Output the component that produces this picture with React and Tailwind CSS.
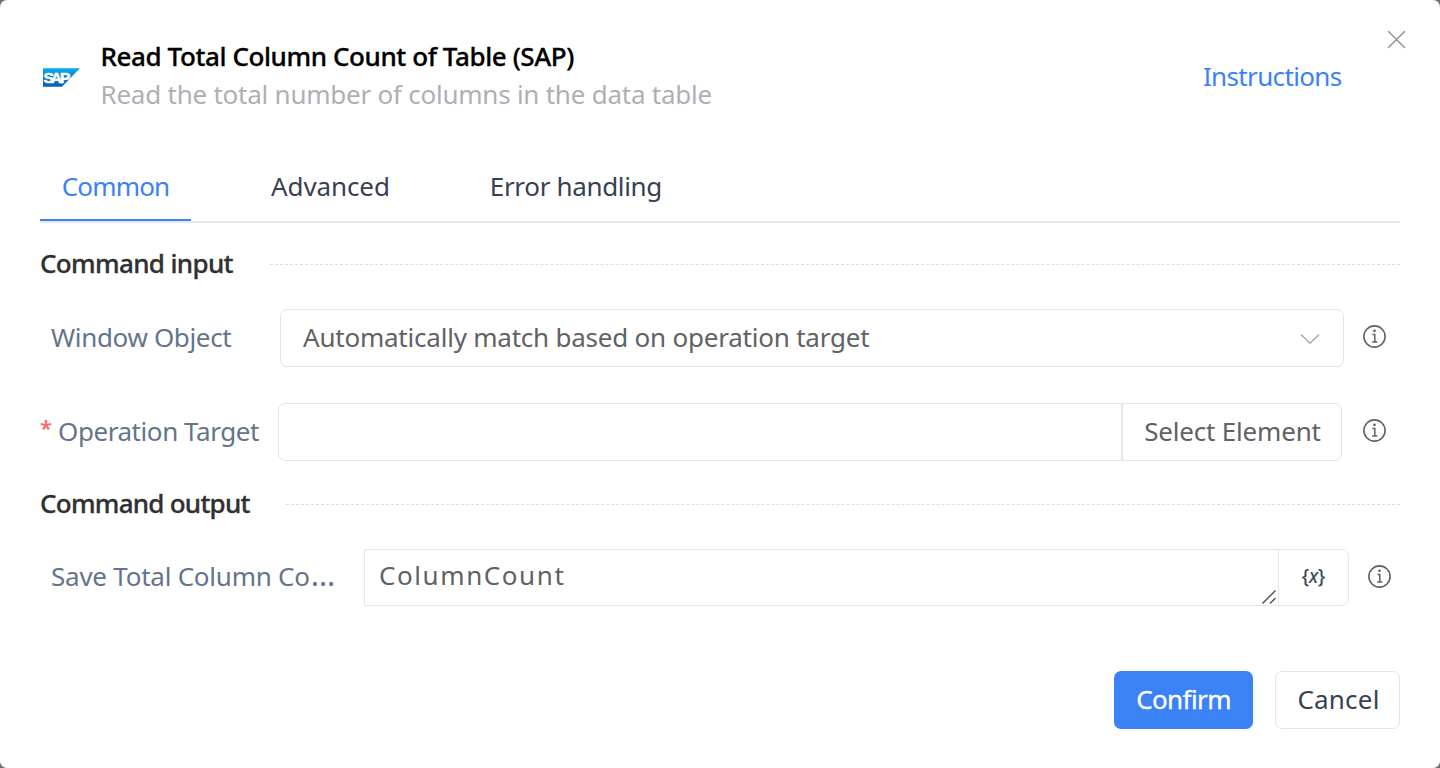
function InfoIcon() {
  return (
    <svg className="size-6 shrink-0" viewBox="0 0 24 24" fill="none" stroke="#606266" strokeWidth="1.6">
      <circle cx="11.5" cy="11.5" r="10.6" />
      <path d="M9.4 9.4h2.4v7.6M9.2 17.1h5.2" strokeWidth="1.5" />
      <circle cx="11.5" cy="5.8" r="1.35" fill="#606266" stroke="none" />
    </svg>
  );
}

function SapLogo() {
  return (
    <svg className="mt-1 h-[19px] w-[37px] shrink-0" viewBox="0 0 37 19">
      <defs>
        <linearGradient id="sap" x1="0" y1="0" x2="0" y2="1">
          <stop offset="0" stopColor="#06aeee" />
          <stop offset="0.5" stopColor="#0a83d2" />
          <stop offset="1" stopColor="#0a5cb4" />
        </linearGradient>
      </defs>
      <polygon points="0,0.2 37,0.2 19,18.8 0,18.8" fill="url(#sap)" />
      <g fontFamily="Liberation Sans, sans-serif" fontWeight="700" fontSize="15.5" fill="#fff" stroke="#fff" strokeWidth="0.6">
        <text x="0.6 7.8 17" y="14.8">SAP</text>
      </g>
    </svg>
  );
}

function Section({ children, className }) {
  return (
    <div className="flex h-[38px] items-center">
      <h2 className={`shrink-0 pb-0.5 whitespace-nowrap font-medium text-[#303133] [-webkit-text-stroke:0.3px] ${className}`}>{children}</h2>
      <div className="mt-px flex-1 border-t border-dashed border-[#dcdfe6]" />
    </div>
  );
}

export default function App() {
  return (
    <div className="h-[768px] w-[1440px] bg-[#6f6f6f]">
      <div className="relative flex h-full flex-col overflow-hidden rounded-[7px] bg-white px-10 text-[26px] leading-[38px] font-['Noto_Sans',sans-serif] text-[#374151]">
        <button className="absolute top-[30px] right-[34px]" aria-label="Close">
          <svg className="size-[19px]" viewBox="0 0 19 19" fill="none" stroke="#909399" strokeWidth="1.5" strokeLinecap="round">
            <path d="M1.5 1.5l16 16M17.5 1.5l-16 16" />
          </svg>
        </button>

        <header className="mt-[37px] flex h-[76px] items-center pl-[3px]">
          <SapLogo />
          <div className="ml-4 flex-1 pl-[4.5px]">
            <h1 className="font-medium tracking-[-0.41px] text-black [-webkit-text-stroke:0.3px]">Read Total Column Count of Table (SAP)</h1>
            <p className="tracking-[-0.237px] text-[#afafb7]">Read the total number of columns in the data table</p>
          </div>
          <a className="mr-[58.5px] pt-0.5 tracking-[-0.65px] text-[#3b82f6]">Instructions</a>
        </header>

        <nav className="mt-[39px] flex h-[71px] border-b-2 border-[#e4e7ed]">
          <div className="flex h-[69px] w-[151px] justify-center border-b-2 border-[#3b82f6] pt-[15px] tracking-[-0.85px] text-[#3b82f6]">Common</div>
          <div className="ml-20 pt-[15px] tracking-[-0.1px]">Advanced</div>
          <div className="ml-[100px] pt-[15px] tracking-[-0.33px]">Error handling</div>
        </nav>

        <div className="mt-[22px]">
          <Section className="w-[230px] tracking-[-0.66px]">Command input</Section>
        </div>

        <div className="mt-[26px] flex h-[58px] items-center">
          <label className="w-60 pb-[3px] pl-[11px] tracking-[-0.35px] text-[#64748b]">Window Object</label>
          <div className="flex h-[58px] w-[1064px] items-center justify-between rounded-[7px] border border-[#e4e5e8] pr-[23px] pl-[22px]">
            <span className="pb-0.5 tracking-[-0.22px] text-[#606266]">Automatically match based on operation target</span>
            <svg className="mt-0.5 h-3 w-5" viewBox="0 0 20 12" fill="none" stroke="#a8abb2" strokeWidth="1.5">
              <path d="M1 1.5l9 8.7 9-8.7" />
            </svg>
          </div>
          <div className="-mt-0.5 ml-[19px]"><InfoIcon /></div>
        </div>

        <div className="mt-9 flex h-[58px] items-center">
          <label className="flex w-[238px] pb-[3px] tracking-[-0.43px] text-[#64748b]">
            <span className="w-[18px] text-[22px] leading-[31px] font-semibold text-[#f56c6c]">*</span>Operation Target
          </label>
          <div className="flex h-[58px] w-[1064px] rounded-[7px] border border-[#e4e5e8]">
            <div className="flex-1" />
            <div className="flex w-[220px] items-center justify-center border-l-2 border-[#e4e5e8] pb-0.5 pl-px tracking-[-0.2px] text-[#606266]">Select Element</div>
          </div>
          <div className="-mt-0.5 ml-[21px]"><InfoIcon /></div>
        </div>

        <div className="mt-6">
          <Section className="w-[246px] tracking-[-0.75px]">Command output</Section>
        </div>

        <div className="mt-[26px] flex h-[57px] items-center">
          <label className="flex w-[324px] pb-[3px] pl-[11px] tracking-[-0.24px] text-[#64748b]">
            Save Total Column Co<span className="ml-px text-[31px] leading-[34px]">…</span>
          </label>
          <div className="flex h-[57px] w-[985px] rounded-r-[7px] border border-[#e4e5e8]">
            <div className="flex flex-1 justify-between">
              <span className="ml-[14px] pt-[6px] tracking-[1.58px] text-[#606266]">ColumnCount</span>
              <svg className="mr-px h-4 w-4 self-end" viewBox="0 0 16 16" fill="none" stroke="#555" strokeWidth="1.5">
                <path d="M1.5 14.5l13-13M9 14.5l5.5-5.5" />
              </svg>
            </div>
            <div className="flex w-[70px] items-center justify-center border-l border-[#e4e5e8] pb-[3px] text-[19px] [-webkit-text-stroke:0.2px]">
              {"{"}<i>x</i>{"}"}
            </div>
          </div>
          <div className="-mt-px ml-[19px]"><InfoIcon /></div>
        </div>

        <footer className="mt-[65px] flex justify-end gap-[22px]">
          <button className="h-[58px] w-[139px] rounded-[7px] bg-[#3b82f6] pb-0.5 tracking-[-0.6px] text-white [-webkit-text-stroke:0.3px]">Confirm</button>
          <button className="h-[58px] w-[125px] rounded-[7px] border border-[#e4e5e8] pb-0.5 pl-[2px] tracking-[0.2px]">Cancel</button>
        </footer>
      </div>
    </div>
  );
}
